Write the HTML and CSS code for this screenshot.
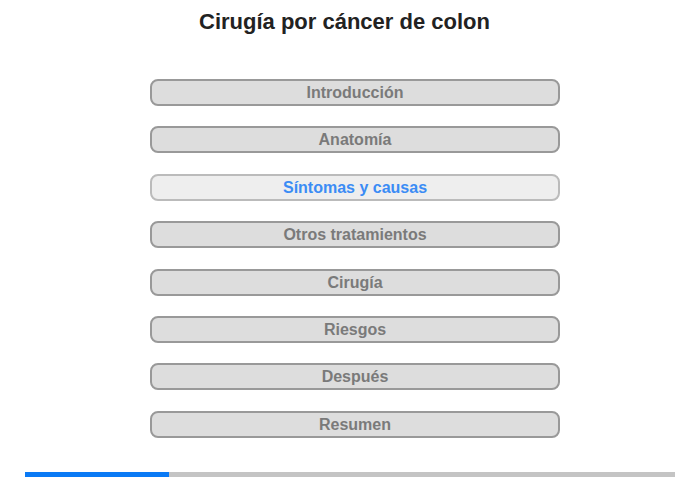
FILE: index.html
```html
<!DOCTYPE html>
<html lang="es">
<head>
<meta charset="utf-8">
<title>Cirugía por cáncer de colon</title>
<link rel="stylesheet" href="styles.css">
</head>
<body>
<div class="page">
  <h1 class="title">Cirugía por cáncer de colon</h1>
  <nav class="menu">
    <button class="item">Introducción</button>
    <button class="item">Anatomía</button>
    <button class="item active">Síntomas y causas</button>
    <button class="item">Otros tratamientos</button>
    <button class="item">Cirugía</button>
    <button class="item">Riesgos</button>
    <button class="item">Después</button>
    <button class="item">Resumen</button>
  </nav>
  <div class="progress"><div class="progress-fill" style="width:144px"></div></div>
</div>
</body>
</html>
```
FILE: styles.css
```css
html, body {
  margin: 0;
  padding: 0;
  background: #fff;
}
.page {
  width: 700px;
  height: 480px;
  display: flex;
  flex-direction: column;
  align-items: center;
  font-family: "Liberation Sans", Arial, sans-serif;
}
.title {
  margin: 9px 11px 0 0;
  font-size: 22px;
  line-height: 26px;
  font-weight: bold;
  color: #222;
}
.menu {
  margin: 44px 0 0 10px;
  display: flex;
  flex-direction: column;
  gap: 20.4px;
}
.item {
  box-sizing: border-box;
  width: 410px;
  height: 27px;
  border: 2px solid #999;
  border-radius: 8px;
  background: #ddd;
  color: #7a7a7a;
  font-family: "Liberation Sans", Arial, sans-serif;
  font-weight: bold;
  font-size: 16px;
  line-height: 21px;
  padding: 0;
  text-align: center;
}
.item.active {
  background: #eee;
  border-color: #bbb;
  color: #3b8cf5;
}
.progress {
  margin-top: 34px;
  width: 650px;
  height: 5px;
  background: #c4c4c4;
}
.progress-fill {
  height: 100%;
  background: #0a7af5;
}
```
